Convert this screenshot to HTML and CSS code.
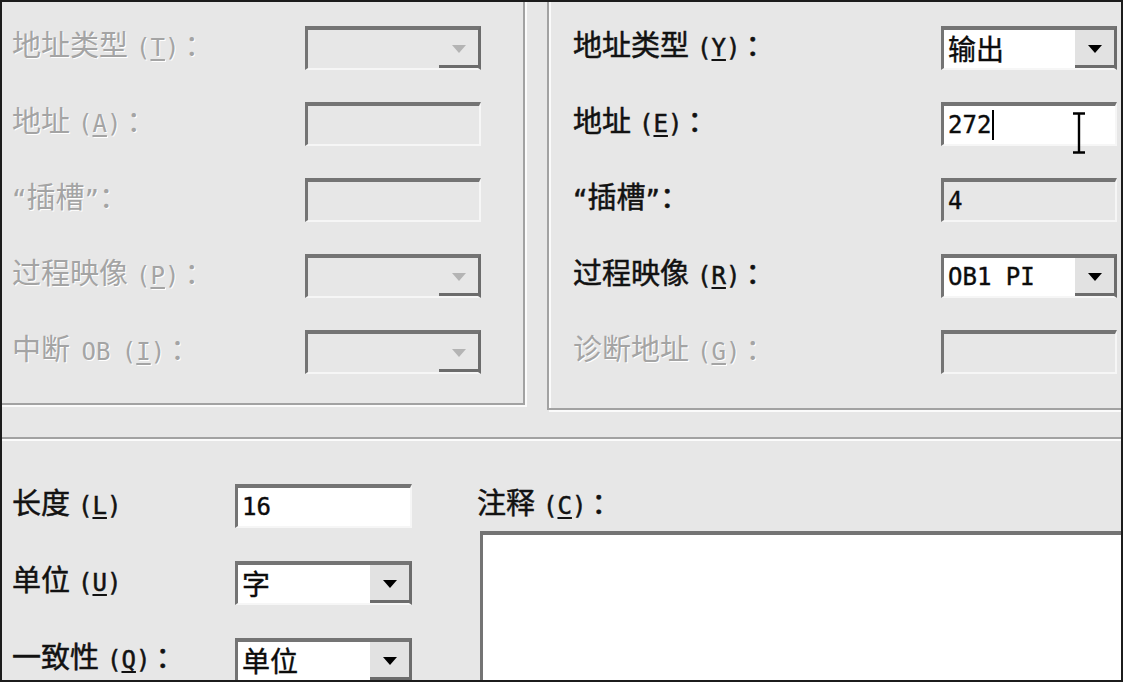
FILE: index.html
```html
<!DOCTYPE html>
<html lang="zh-CN">
<head>
<meta charset="utf-8">
<title>属性</title>
<link rel="stylesheet" href="styles.css">
</head>
<body>
<div class="dialog">
  <div class="top">
    <div class="group group-left">
      <div class="row">
        <span class="lbl off">地址类型<span class="m">(<u>T</u>)</span>：</span>
        <div class="ctl combo off"><span class="val"></span><span class="btn"><i class="arrow"></i></span></div>
      </div>
      <div class="row">
        <span class="lbl off">地址<span class="m">(<u>A</u>)</span>：</span>
        <div class="ctl off"></div>
      </div>
      <div class="row">
        <span class="lbl off"><span class="q">“</span>插槽<span class="q">”</span>：</span>
        <div class="ctl off"></div>
      </div>
      <div class="row">
        <span class="lbl off">过程映像<span class="m">(<u>P</u>)</span>：</span>
        <div class="ctl combo off"><span class="val"></span><span class="btn"><i class="arrow"></i></span></div>
      </div>
      <div class="row">
        <span class="lbl off">中断<span class="m tight"> OB (<u>I</u>)</span>：</span>
        <div class="ctl combo off"><span class="val"></span><span class="btn"><i class="arrow"></i></span></div>
      </div>
    </div>

    <div class="group group-right">
      <div class="row">
        <span class="lbl">地址类型<span class="m">(<u>Y</u>)</span>：</span>
        <div class="ctl combo"><span class="val cjk">输出</span><span class="btn"><i class="arrow"></i></span></div>
      </div>
      <div class="row">
        <span class="lbl">地址<span class="m">(<u>E</u>)</span>：</span>
        <div class="ctl edit"><span class="val">272</span><span class="caret"></span>
          <svg class="ibeam" width="16" height="42" viewBox="0 0 16 42"><path d="M2 1.5h12M8 1.5v39M2 40.5h12" stroke="#000" stroke-width="2.4" fill="none"/></svg>
        </div>
      </div>
      <div class="row">
        <span class="lbl"><span class="q">“</span>插槽<span class="q">”</span>：</span>
        <div class="ctl readonly"><span class="val">4</span></div>
      </div>
      <div class="row">
        <span class="lbl">过程映像<span class="m">(<u>R</u>)</span>：</span>
        <div class="ctl combo"><span class="val">OB1 PI</span><span class="btn"><i class="arrow"></i></span></div>
      </div>
      <div class="row">
        <span class="lbl off">诊断地址<span class="m">(<u>G</u>)</span>：</span>
        <div class="ctl off"></div>
      </div>
    </div>
  </div>

  <div class="sep"></div>

  <div class="bottom">
    <div class="form">
      <div class="row2">
        <span class="lbl">长度<span class="m">(<u>L</u>)</span></span>
        <div class="ctl"><span class="val">16</span></div>
      </div>
      <div class="row2">
        <span class="lbl">单位<span class="m">(<u>U</u>)</span></span>
        <div class="ctl combo"><span class="val cjk">字</span><span class="btn"><i class="arrow"></i></span></div>
      </div>
      <div class="row2">
        <span class="lbl">一致性<span class="m">(<u>Q</u>)</span>：</span>
        <div class="ctl combo"><span class="val cjk">单位</span><span class="btn"><i class="arrow"></i></span></div>
      </div>
    </div>
    <div class="comment">
      <div class="comment-lbl"><span class="lbl">注释<span class="m">(<u>C</u>)</span>：</span></div>
      <div class="memo"></div>
    </div>
  </div>
</div>
</body>
</html>
```

FILE: styles.css
```css
* { box-sizing: border-box; }

html, body {
  margin: 0;
  padding: 0;
  background: #e7e7e7;
}

.dialog {
  width: 1123px;
  height: 682px;
  border: 2px solid #1c1c1c;
  background: #e7e7e7;
  overflow: hidden;
  font-family: "Noto Sans CJK SC", sans-serif;
  color: #111;
}

.top {
  display: flex;
  align-items: flex-start;
  margin-top: -12px;
}

.group {
  border: 2px solid #a2a2a2;
  box-shadow: inset 2px 2px 0 #fbfbfb, 2px 2px 0 #fbfbfb;
  display: flex;
  flex-direction: column;
  gap: 32px;
  flex: none;
}

.group-left {
  margin-left: -12px;
  width: 535px;
  height: 415px;
  padding: 34px 42px 0 20px;
}

.group-right {
  margin-left: 22px;
  width: 588px;
  height: 420px;
  padding: 34px 16px 0 24px;
}

.row {
  display: flex;
  align-items: center;
  height: 44px;
}

.row .lbl { flex: 1; }

.lbl {
  font-size: 29px;
  line-height: 40px;
  white-space: pre;
  color: #121212;
  -webkit-text-stroke: 0.5px #121212;
  margin-top: -5px;
}

.lbl.off {
  color: #a4a4a4;
  -webkit-text-stroke: 0;
  text-shadow: 1px 1px 0 #ffffff;
}

.m {
  font-family: "DejaVu Sans Mono", monospace;
  font-size: 24px;
  padding-left: 8px;
  padding-right: 5px;
}

.m.tight {
  padding-left: 0;
  word-spacing: -3px;
}

.q {
  font-family: "DejaVu Sans Mono", monospace;
  font-size: 24px;
}

.m u {
  text-decoration-thickness: 2px;
  text-underline-offset: 3px;
}

.ctl {
  position: relative;
  width: 176px;
  height: 44px;
  flex: none;
  display: flex;
  align-items: center;
  background: #ffffff;
  border-style: solid;
  border-width: 4px 2px 2px 3px;
  border-color: #747474 #f6f6f6 #f6f6f6 #747474;
  padding-left: 4px;
}

.ctl.off,
.ctl.readonly {
  background: #e7e7e7;
}

.ctl.combo {
  border-right-color: #6c6c6c;
  border-right-width: 3px;
  padding-right: 0;
}

.val {
  font-family: "DejaVu Sans Mono", "Noto Sans CJK SC", monospace;
  font-size: 24px;
  color: #0c0c0c;
  -webkit-text-stroke: 0.4px #0c0c0c;
  white-space: pre;
}

.val.cjk {
  font-family: "Noto Sans CJK SC", sans-serif;
  font-size: 28px;
  margin-top: -2px;
}

.btn {
  margin-left: auto;
  align-self: stretch;
  width: 39px;
  background: #e2e2e2;
  border-bottom: 3px solid #6c6c6c;
  display: flex;
  align-items: center;
  justify-content: center;
}

.arrow {
  width: 0;
  height: 0;
  border-left: 7px solid transparent;
  border-right: 7px solid transparent;
  border-top: 8px solid #000;
  margin-top: 2px;
}

.off .btn { background: #e7e7e7; }
.off .arrow { border-top-color: #b4b4b4; }

.caret {
  width: 2px;
  height: 30px;
  background: #000;
  margin-left: 1px;
}

.ibeam {
  position: absolute;
  left: 127px;
  top: 6px;
}

.sep {
  margin: 27px -2px 0;
  border-top: 2px solid #a2a2a2;
  border-bottom: 2px solid #fbfbfb;
}

.bottom {
  display: flex;
  padding: 43px 0 0 10px;
}

.form {
  display: flex;
  flex-direction: column;
  gap: 33px;
  flex: none;
}

.row2 {
  display: flex;
  align-items: center;
  height: 44px;
}

.row2 .lbl { width: 223px; }

.row2 .ctl { width: 177px; }

.comment {
  margin-left: 65px;
  flex: 1;
  margin-right: -20px;
}

.comment-lbl {
  height: 44px;
  display: flex;
  align-items: center;
}

.memo {
  margin: 3px 0 0 3px;
  height: 220px;
  background: #ffffff;
  border-top: 4px solid #747474;
  border-left: 3px solid #747474;
}
```
